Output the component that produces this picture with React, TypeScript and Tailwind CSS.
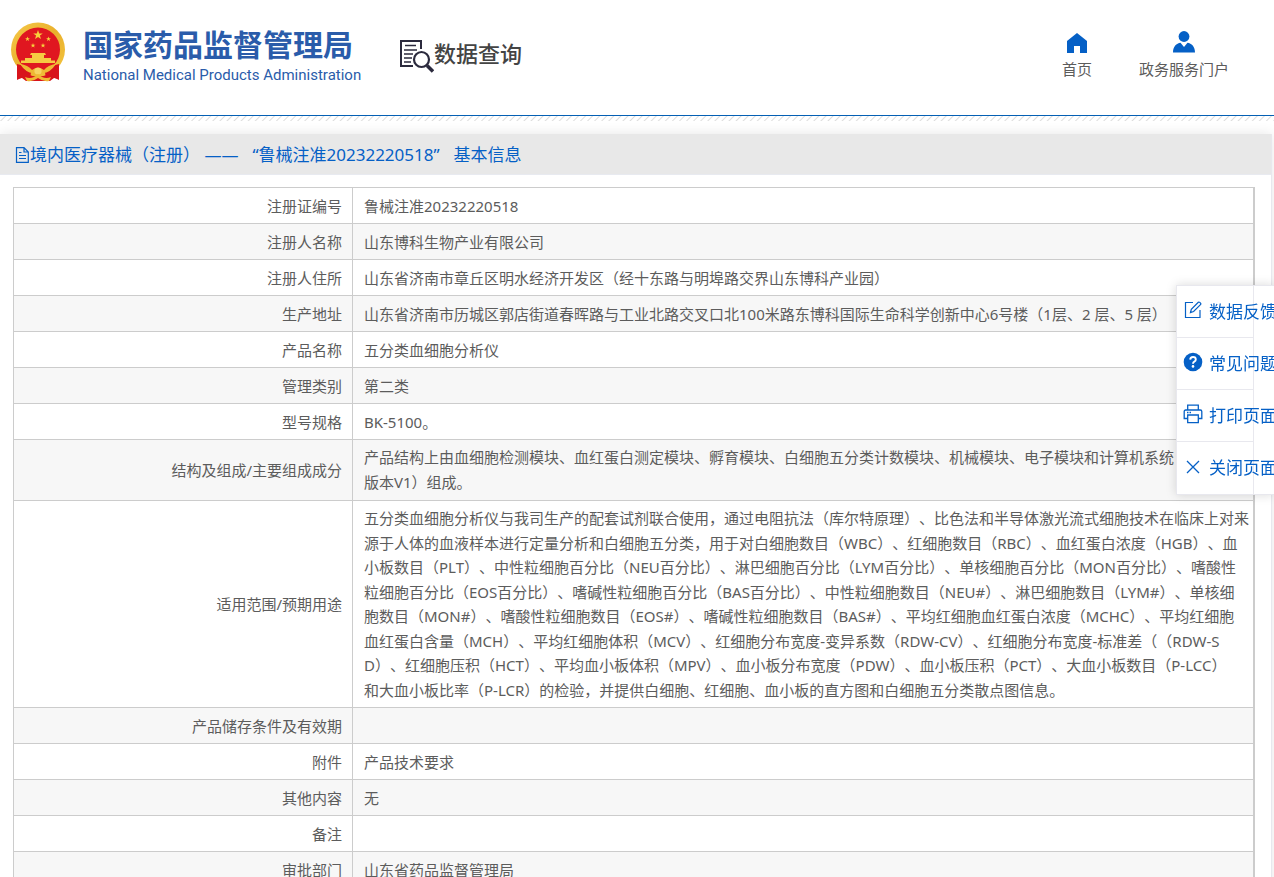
import type { ReactNode } from "react";

type Row = { label: string; lines: string[] };

const rows: Row[] = [
  { label: "注册证编号", lines: ["鲁械注准20232220518"] },
  { label: "注册人名称", lines: ["山东博科生物产业有限公司"] },
  { label: "注册人住所", lines: ["山东省济南市章丘区明水经济开发区（经十东路与明埠路交界山东博科产业园）"] },
  {
    label: "生产地址",
    lines: ["山东省济南市历城区郭店街道春晖路与工业北路交叉口北100米路东博科国际生命科学创新中心6号楼（1层、2 层、5 层）"],
  },
  { label: "产品名称", lines: ["五分类血细胞分析仪"] },
  { label: "管理类别", lines: ["第二类"] },
  { label: "型号规格", lines: ["BK-5100。"] },
  {
    label: "结构及组成/主要组成成分",
    lines: [
      "产品结构上由血细胞检测模块、血红蛋白测定模块、孵育模块、白细胞五分类计数模块、机械模块、电子模块和计算机系统（",
      "版本V1）组成。",
    ],
  },
  {
    label: "适用范围/预期用途",
    lines: [
      "五分类血细胞分析仪与我司生产的配套试剂联合使用，通过电阻抗法（库尔特原理）、比色法和半导体激光流式细胞技术在临床上对来",
      "源于人体的血液样本进行定量分析和白细胞五分类，用于对白细胞数目（WBC）、红细胞数目（RBC）、血红蛋白浓度（HGB）、血",
      "小板数目（PLT）、中性粒细胞百分比（NEU百分比）、淋巴细胞百分比（LYM百分比）、单核细胞百分比（MON百分比）、嗜酸性",
      "粒细胞百分比（EOS百分比）、嗜碱性粒细胞百分比（BAS百分比）、中性粒细胞数目（NEU#）、淋巴细胞数目（LYM#）、单核细",
      "胞数目（MON#）、嗜酸性粒细胞数目（EOS#）、嗜碱性粒细胞数目（BAS#）、平均红细胞血红蛋白浓度（MCHC）、平均红细胞",
      "血红蛋白含量（MCH）、平均红细胞体积（MCV）、红细胞分布宽度-变异系数（RDW-CV）、红细胞分布宽度-标准差（（RDW-S",
      "D）、红细胞压积（HCT）、平均血小板体积（MPV）、血小板分布宽度（PDW）、血小板压积（PCT）、大血小板数目（P-LCC）",
      "和大血小板比率（P-LCR）的检验，并提供白细胞、红细胞、血小板的直方图和白细胞五分类散点图信息。",
    ],
  },
  { label: "产品储存条件及有效期", lines: [] },
  { label: "附件", lines: ["产品技术要求"] },
  { label: "其他内容", lines: ["无"] },
  { label: "备注", lines: [] },
  { label: "审批部门", lines: ["山东省药品监督管理局"] },
];

const STAR = "0,-10 2.4,-3.1 9.5,-3.1 3.8,1.2 5.9,8.1 0,4 -5.9,8.1 -3.8,1.2 -9.5,-3.1 -2.4,-3.1";

function Emblem() {
  return (
    <svg className="h-[60px] w-[56px] shrink-0" viewBox="0 0 56 60" aria-hidden="true">
      <defs>
        <linearGradient id="gold" x1="0" y1="0" x2="1" y2="1">
          <stop offset="0" stopColor="#f6c94a" />
          <stop offset="0.5" stopColor="#e9b02c" />
          <stop offset="1" stopColor="#f4c640" />
        </linearGradient>
      </defs>
      <path d="M8 39 L7 57 L12 56 L16 59 H40 L44 56 L49 57 L48 39Z" fill="#d8131b" />
      <circle cx="28" cy="27.5" r="27" fill="url(#gold)" />
      <circle cx="28" cy="27.5" r="22" fill="#e01720" />
      <path d="M7 42 Q17 44 21 50 L20 58 L13 55 L7 58Z M49 42 Q39 44 35 50 L36 58 L43 55 L49 58Z" fill="#d8131b" />
      <polygon points={STAR} transform="translate(28 13) scale(.5)" fill="#f8cf3c" />
      <polygon points={STAR} transform="translate(17.5 17) scale(.26)" fill="#f8cf3c" />
      <polygon points={STAR} transform="translate(38.5 17) scale(.26)" fill="#f8cf3c" />
      <polygon points={STAR} transform="translate(23 23.5) scale(.26)" fill="#f8cf3c" />
      <polygon points={STAR} transform="translate(33 23.5) scale(.26)" fill="#f8cf3c" />
      <path d="M21 31 H35 L36 33 H20Z M22 33 H34 V36 H41 V39 H15 V36 H22Z M11 38.5 H45 V41 H11Z" fill="#f6cb42" />
      <path d="M10 42 Q18 43 22 48 Q28 43.5 34 48 Q38 43 46 42 Q40 51 33 51 Q28 48 23 51 Q16 51 10 42Z" fill="#efb934" />
      <circle cx="28" cy="49" r="3.6" fill="#f7d462" />
      <path d="M15 55 Q22 58 28 52 Q34 58 41 55 L39 59 Q33 60 28 56 Q23 60 17 59Z" fill="#efb934" />
    </svg>
  );
}

function QueryIcon() {
  return (
    <svg className="h-[34px] w-[34px] shrink-0" viewBox="0 0 34 34" fill="none" stroke="#2b2a3d" aria-hidden="true">
      <path d="M21 10 V2 H1 V27 H13" strokeWidth="2" />
      <path d="M5 6.5 H16 M4 11 H17 M4 15 H13 M4 19 H12 M4 23 H11" strokeWidth="1.4" />
      <circle cx="21.5" cy="20.5" r="7.5" strokeWidth="2.2" fill="#fff" />
      <path d="M27 26.5 L33 32.5" strokeWidth="3.6" />
    </svg>
  );
}

function HomeIcon() {
  return (
    <svg className="h-5 w-5" viewBox="0 0 20 20" fill="#0560c6" aria-hidden="true">
      <path d="M10 0 L20 8 V20 H13 V13 H7 V20 H0 V8Z" />
    </svg>
  );
}

function UserIcon() {
  return (
    <svg className="h-[22px] w-[22px]" viewBox="0 0 22 22" fill="#0560c6" aria-hidden="true">
      <circle cx="11" cy="5.5" r="5.4" />
      <path d="M0 21.5 C0 15.5 3.5 12.5 7.5 11.8 L11 16 L14.5 11.8 C18.5 12.5 22 15.5 22 21.5Z" />
    </svg>
  );
}

function DocumentIcon() {
  return (
    <svg className="h-4 w-[15px] shrink-0" viewBox="0 0 15 16" fill="none" stroke="#0560c6" aria-hidden="true">
      <path d="M1.5 .7 H9 L13.3 5 V15.3 H1.5Z M9 .7 V5 H13.3" strokeWidth="1.2" />
      <path d="M4 5.5 H6.5 M4 8.5 H11 M4 11.5 H11" strokeWidth="1.1" />
    </svg>
  );
}

function EditIcon() {
  return (
    <svg className="h-[18px] w-[18px]" viewBox="0 0 18 18" fill="none" stroke="#0560c6" strokeWidth="1.2" aria-hidden="true">
      <path d="M9 1.5 H1.5 V16.5 H16 V9" />
      <path d="M6.5 11.5 L7.3 8.3 L14.3 1.3 Q15 .7 15.8 1.4 L16.5 2.1 Q17.2 2.9 16.5 3.6 L9.6 10.5Z" />
    </svg>
  );
}

function HelpIcon() {
  return (
    <svg className="h-5 w-5" viewBox="0 0 20 20" fill="none" aria-hidden="true">
      <circle cx="10" cy="10" r="9.3" fill="#0560c6" />
      <path
        d="M7.2 7.6 Q7.3 5 10 5 Q12.8 5 12.8 7.4 Q12.8 8.8 11.3 9.6 Q10 10.3 10 11.8"
        stroke="#fff"
        strokeWidth="1.9"
      />
      <circle cx="10" cy="14.4" r="1.3" fill="#fff" />
    </svg>
  );
}

function PrintIcon() {
  return (
    <svg className="h-5 w-5" viewBox="0 0 20 20" fill="none" stroke="#0560c6" strokeWidth="1.3" aria-hidden="true">
      <path d="M4.7 6 V1.2 H15.3 V6" />
      <path d="M4.7 14.5 H1.2 V7.5 Q1.2 6 2.7 6 H17.3 Q18.8 6 18.8 7.5 V14.5 H15.3" />
      <path d="M4.7 11 H15.3 V18.7 H4.7Z" />
      <path d="M4 8.5 H5.5 M6.5 8.5 H8" />
    </svg>
  );
}

function CloseIcon() {
  return (
    <svg className="h-5 w-5" viewBox="0 0 20 20" fill="none" stroke="#0560c6" strokeWidth="1.3" aria-hidden="true">
      <path d="M4 4 L16 16 M16 4 L4 16" />
    </svg>
  );
}

function NavLink({ icon, label }: { icon: ReactNode; label: string }) {
  return (
    <a href="#" className="flex flex-col items-center gap-1 text-[15px] leading-6 text-[#5c5c5c]">
      <span className="flex h-[22px] items-end">{icon}</span>
      {label}
    </a>
  );
}

const actions: { label: string; icon: ReactNode }[] = [
  { label: "数据反馈", icon: <EditIcon /> },
  { label: "常见问题", icon: <HelpIcon /> },
  { label: "打印页面", icon: <PrintIcon /> },
  { label: "关闭页面", icon: <CloseIcon /> },
];

function rowClass(lineCount: number) {
  if (lineCount > 2) return "h-[207px]";
  return lineCount === 2 ? "bg-[#f7f7f7] leading-[25px]" : "leading-6 even:bg-[#f7f7f7]";
}

export default function App() {
  return (
    <div
      className="overflow-x-hidden bg-white font-['Noto_Sans','Noto_Sans_CJK_SC',sans-serif] [text-spacing-trim:space-all]"
      lang="zh-CN"
    >
      <header className="flex h-[116px] items-start border-b border-[#0560b4] pr-[45px] pl-[10px]">
        <div className="flex pt-[22px]">
          <Emblem />
          <div className="ml-[17px] w-[270px] pt-[5px] whitespace-nowrap text-[#2a5caa]">
            <h1 className="text-[30px] leading-9 font-bold">国家药品监督管理局</h1>
            <p className="font-[Roboto,sans-serif] text-[15px] leading-6">National Medical Products Administration</p>
          </div>
        </div>
        <div className="ml-[47px] flex pt-[39px] text-[22px] leading-7 font-medium whitespace-nowrap text-[#444]">
          <QueryIcon />
          <span>数据查询</span>
        </div>
        <nav className="ml-auto flex gap-[47px] pt-[31px] whitespace-nowrap">
          <NavLink icon={<HomeIcon />} label="首页" />
          <NavLink icon={<UserIcon />} label="政务服务门户" />
        </nav>
      </header>
      <div className="h-[5px] bg-[repeating-linear-gradient(135deg,#fff_0px,#fff_3px,#ddd_4px,#fff_5px)]" />

      <main className="mt-[13px] mr-[2px] border-r border-[#e8e8ee] shadow-[0_0_12px_rgba(0,0,0,0.1)]">
        <h2 className="flex h-[41px] items-center border-b border-[#e8eaf0] bg-[#e8e8e8] pt-[2px] pl-[15px] text-[17px] whitespace-nowrap text-[#0560c6]">
          <DocumentIcon />
          <span>
            境内医疗器械（注册） ——<span className="mr-[14px] ml-[14px]">“鲁械注准20232220518”</span>基本信息
          </span>
        </h2>
        <div className="pt-3 pr-4 pl-[13px]">
          <table className="w-full table-fixed border-collapse border border-r-2 border-[#ccc] text-[15px] text-[#5c5c5c]">
            <colgroup>
              <col className="w-[339px]" />
              <col />
            </colgroup>
            <tbody>
              {rows.map((row) => (
                <tr key={row.label} className={rowClass(row.lines.length)}>
                  <th scope="row" className="h-9 border border-[#ccc] py-[5px] pr-[10px] text-right font-normal">
                    {row.label}
                  </th>
                  <td className="border border-[#ccc] py-[5px] pl-[11px] whitespace-nowrap">
                    <div className={row.lines.length > 2 ? "flex h-[196px] flex-col justify-between leading-6" : ""}>
                      {row.lines.map((line) => (
                        <span key={line} className="block">
                          {line}
                        </span>
                      ))}
                    </div>
                  </td>
                </tr>
              ))}
            </tbody>
          </table>
        </div>
      </main>

      <aside className="fixed top-[285px] right-0 w-[98px] overflow-hidden border border-r-0 border-[#e8e8ee] bg-white shadow-[0_0_10px_rgba(0,0,0,0.15)]">
        {actions.map((action) => (
          <button
            key={action.label}
            type="button"
            className="flex h-[52px] w-[77px] items-center border-r border-b border-[#e8e8ee] pl-[6px] text-[17px] whitespace-nowrap text-[#0560c6] last:border-b-0"
          >
            <span className="flex w-5 shrink-0 justify-center pb-[3px]">{action.icon}</span>
            <span className="ml-[6px]">{action.label}</span>
          </button>
        ))}
      </aside>
    </div>
  );
}
